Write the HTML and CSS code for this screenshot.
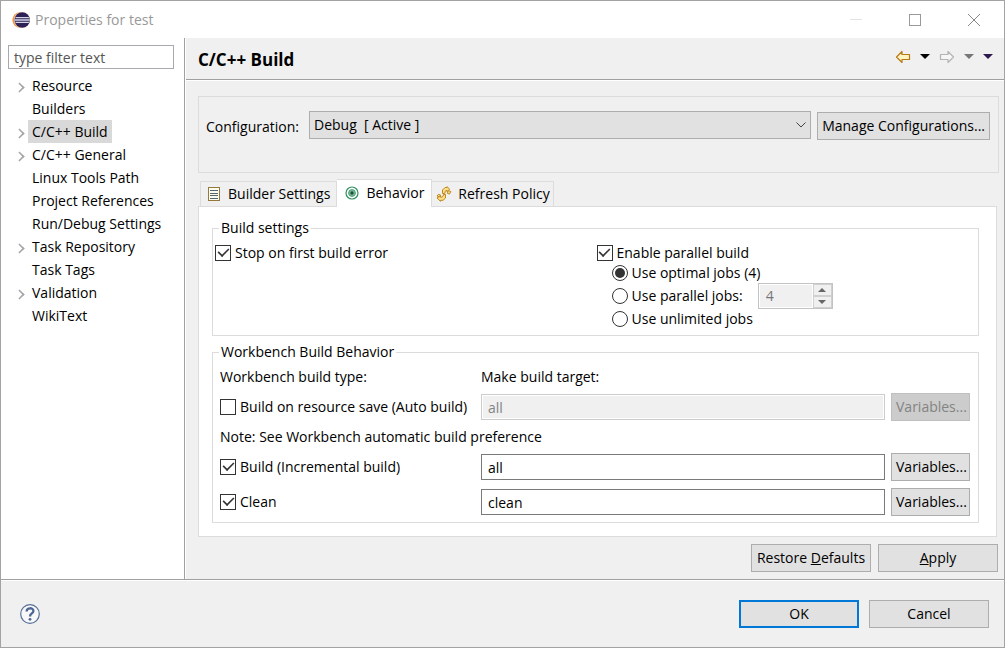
FILE: index.html
```html
<!DOCTYPE html>
<html lang="en">
<head>
<meta charset="utf-8">
<title>Properties for test</title>
<link rel="stylesheet" href="styles.css">
</head>
<body>
<div class="window">
  <header class="titlebar">
    <svg class="logo" viewBox="0 0 18 18" width="18" height="18" aria-hidden="true">
      <circle cx="8.200" cy="9" r="7.800" fill="#f2943a"/>
      <circle cx="10" cy="9" r="8" fill="#fbe3c8"/>
      <circle cx="10.200" cy="9" r="7.700" fill="#2c2255"/>
      <path d="M3.500 6.600h13.400M2.600 9h15.200M3.500 11.400h13.400" stroke="#d4d4e6" stroke-width="1.400"/>
    </svg>
    <h1 class="title">Properties for test</h1>
    <div class="caption">
      <button class="cap" aria-label="Minimize" disabled><svg viewBox="0 0 14 14" width="14" height="14"><path d="M1 6.500h12" stroke="#e3e3e3"/></svg></button>
      <button class="cap" aria-label="Maximize"><svg viewBox="0 0 14 14" width="14" height="14"><rect x="1.500" y="1.500" width="11" height="11" fill="none" stroke="#999"/></svg></button>
      <button class="cap" aria-label="Close"><svg viewBox="0 0 14 14" width="14" height="14"><path d="M1 1l12 12M13 1L1 13" stroke="#888"/></svg></button>
    </div>
  </header>
  <div class="body">
    <nav class="sidebar">
      <input class="filter" type="text" placeholder="type filter text" aria-label="Filter">
      <ul class="tree">
        <li class="branch"><a href="#">Resource</a></li>
        <li><a href="#">Builders</a></li>
        <li class="branch"><a href="#" class="selected">C/C++ Build</a></li>
        <li class="branch"><a href="#">C/C++ General</a></li>
        <li><a href="#">Linux Tools Path</a></li>
        <li><a href="#">Project References</a></li>
        <li><a href="#">Run/Debug Settings</a></li>
        <li class="branch"><a href="#">Task Repository</a></li>
        <li><a href="#">Task Tags</a></li>
        <li class="branch"><a href="#">Validation</a></li>
        <li><a href="#">WikiText</a></li>
      </ul>
    </nav>
    <main class="page">
      <div class="page-head">
        <h2>C/C++ Build</h2>
        <div class="history">
          <button aria-label="Back"><svg viewBox="0 0 16 14" width="16" height="14"><path d="M1.500 7L7 1.500V4.500H14.500V9.500H7V12.500Z" fill="#fff3c0" stroke="#b87a14" stroke-width="1.200" stroke-linejoin="round"/></svg></button>
          <button aria-label="Back history"><svg viewBox="0 0 10 6" width="10" height="6"><path d="M0 0h10L5 5z" fill="#000"/></svg></button>
          <button aria-label="Forward" disabled><svg viewBox="0 0 16 14" width="16" height="14"><path d="M14.500 7L9 1.500V4.500H1.500V9.500H9V12.500Z" fill="#f6f6f6" stroke="#b4b4b4" stroke-width="1.200" stroke-linejoin="round"/></svg></button>
          <button aria-label="Forward history" disabled><svg viewBox="0 0 10 6" width="10" height="6"><path d="M0 0h10L5 5z" fill="#777"/></svg></button>
          <button aria-label="View menu"><svg viewBox="0 0 10 6" width="10" height="6"><path d="M0 0h10L5 5z" fill="#2c1a4c"/></svg></button>
        </div>
      </div>
      <div class="content">
        <section class="config">
          <label for="config">Configuration:</label>
          <div class="select">
            <select id="config"><option>Debug&nbsp; [ Active ]</option></select>
            <svg viewBox="0 0 10 6" width="10" height="6"><path d="M.5.5L5 5L9.500.5" fill="none" stroke="#444"/></svg>
          </div>
          <button class="btn">Manage Configurations...</button>
        </section>
        <div class="tabs" role="tablist">
          <button class="tab" role="tab">
            <svg viewBox="0 0 16 16" width="16" height="16"><rect x="2.500" y="1.500" width="11" height="13" fill="#fdfdf4" stroke="#94793a"/><path d="M4 4.500h8M4 7.500h8M4 9.500h8M4 12.500h8" stroke="#56686f"/></svg>
            Builder Settings</button>
          <button class="tab active" role="tab" aria-selected="true">
            <svg viewBox="0 0 16 16" width="16" height="16"><circle cx="8" cy="8" r="6" fill="#fff" stroke="#2f8f5f" stroke-width="1.200"/><circle cx="8" cy="8" r="3.400" fill="#7fbb9b" stroke="#4f9c77"/><circle cx="8" cy="8" r="1.700" fill="#1d5237"/></svg>
            Behavior</button>
          <button class="tab" role="tab">
            <svg viewBox="0 0 16 16" width="16" height="16" fill="#ffe08a" stroke="#bd861c" stroke-linejoin="round"><path d="M7.500 7.500H5.500V4L8 1.500H10V.7L12.700 3.200L10 5.800V4.600H9L8 5.500V7.500Z" transform="translate(1 0)"/><path d="M12 4.500L14.800 5.500L13.500 8L11.500 7.500Z"/><path d="M7.500 8.500H9.500V12L7 14.300H4.500V15.300L1 12L4.500 9.500V11.200H6L7 10.300Z"/><path d="M3.500 11L1 10L2.500 8.300L4.500 9Z"/></svg>
            Refresh Policy</button>
        </div>
        <div class="panel" role="tabpanel">
          <fieldset>
            <legend>Build settings</legend>
            <div class="cols">
              <label class="opt"><input type="checkbox" checked>Stop on first build error</label>
              <div>
                <label class="opt"><input type="checkbox" checked>Enable parallel build</label>
                <div class="jobs">
                  <label class="opt"><input type="radio" name="jobs" checked>Use optimal jobs (4)</label>
                  <div class="parallel">
                    <label class="opt"><input type="radio" name="jobs">Use parallel jobs:</label>
                    <span class="spinner">
                      <input type="text" value="4" aria-label="Number of jobs" disabled>
                      <span class="steps">
                        <button aria-label="Increase" disabled><svg viewBox="0 0 8 4" width="8" height="4"><path d="M0 4L4 0L8 4z" fill="#666"/></svg></button>
                        <button aria-label="Decrease" disabled><svg viewBox="0 0 8 4" width="8" height="4"><path d="M0 0L4 4L8 0z" fill="#666"/></svg></button>
                      </span>
                    </span>
                  </div>
                  <label class="opt"><input type="radio" name="jobs">Use unlimited jobs</label>
                </div>
              </div>
            </div>
          </fieldset>
          <fieldset>
            <legend>Workbench Build Behavior</legend>
            <div class="grid">
              <span class="text">Workbench build type:</span>
              <span class="text wide">Make build target:</span>
              <label class="opt"><input type="checkbox">Build on resource save (Auto build)</label>
              <input class="field" type="text" value="all" aria-label="Auto build target" disabled>
              <button class="btn" disabled>Variables...</button>
              <span class="text note">Note: See Workbench automatic build preference</span>
              <label class="opt"><input type="checkbox" checked>Build (Incremental build)</label>
              <input class="field" type="text" value="all" aria-label="Incremental build target">
              <button class="btn">Variables...</button>
              <label class="opt"><input type="checkbox" checked>Clean</label>
              <input class="field" type="text" value="clean" aria-label="Clean target">
              <button class="btn">Variables...</button>
            </div>
          </fieldset>
        </div>
        <div class="actions">
          <button class="btn">Restore <u>D</u>efaults</button>
          <button class="btn"><u>A</u>pply</button>
        </div>
      </div>
    </main>
  </div>
  <footer class="footer">
    <button class="help" aria-label="Help"><svg viewBox="0 0 20 20" width="20" height="20"><circle cx="10" cy="10" r="9.300" fill="#f8f8f8" stroke="#566f98" stroke-width="1.200"/><path d="M6.600 7.400C6.600 3.300 13.400 3.300 13.400 7C13.400 9.500 10 9.400 10 12.400" fill="none" stroke="#4f6694" stroke-width="2.300"/><circle cx="10" cy="15.300" r="1.400" fill="#4f6694"/></svg></button>
    <button class="btn primary">OK</button>
    <button class="btn">Cancel</button>
  </footer>
</div>
</body>
</html>
```

FILE: styles.css
```css
* { box-sizing: border-box; }
body {
  margin: 0;
  font: 14px/20px "Open Sans", "Noto Sans", sans-serif;
  color: #000;
}
button, input, select { font: inherit; color: inherit; margin: 0; }
button svg { display: block; }
.window {
  min-height: 100vh;
  display: flex;
  flex-direction: column;
  border: 1px solid #a3a3a3;
  background: #f0f0f0;
}
.titlebar {
  display: flex;
  align-items: center;
  height: 37px;
  padding: 0 1px 0 11px;
  background: #fff;
}
.title {
  flex: 1;
  margin: 0 0 0 5px;
  font-size: 14px;
  font-weight: 400;
  color: #999;
}
.caption { display: flex; }
.cap {
  width: 59px;
  height: 36px;
  display: grid;
  place-items: center;
  border: 0;
  background: none;
}
.body { flex: 1; display: flex; border-bottom: 1px solid #a0a0a0; }
.sidebar {
  width: 184px;
  flex: none;
  padding: 7px 10px 7px 7px;
  background: #fff;
  border-right: 1px solid #a0a0a0;
}
.filter {
  display: block;
  width: 100%;
  height: 24px;
  padding: 0 5px;
  border: 1px solid #a8a8ae;
}
.filter::placeholder { color: #555; }
.tree { list-style: none; margin: 5px 0 0; padding: 0; }
.tree li { display: flex; height: 23px; padding-left: 20px; position: relative; }
.tree a { padding: 0 4px; line-height: 23px; color: #000; text-decoration: none; white-space: nowrap; }
.tree .selected { background: #d9d9d9; }
.branch::before {
  content: "";
  position: absolute;
  left: 7px;
  top: 9px;
  width: 7px;
  height: 7px;
  border: solid #a6a6a6;
  border-width: 2px 2px 0 0;
  transform: rotate(45deg) scale(0.8);
}
.page { flex: 1; min-width: 0; border-left: 1px solid #fff; }
.page-head {
  display: flex;
  align-items: center;
  height: 42px;
  padding: 2px 11px 0 12px;
  border-bottom: 1px solid #a0a0a0;
}
.page-head h2 { flex: 1; margin: 0; font-size: 17px; line-height: 22px; }
.history { display: flex; align-items: center; gap: 9px; padding-bottom: 6px; }
.history button { padding: 0; border: 0; background: none; }
.content { padding: 15px 5px 6px 12px; border-top: 1px solid #fff; }
.config {
  display: flex;
  align-items: flex-start;
  gap: 6px;
  height: 77px;
  padding: 14px 8px 0 7px;
  border: 1px solid #dcdcdc;
}
.config label { padding-right: 4px; line-height: 32px; }
.config .btn { margin-top: 1px; }
.select { flex: 1; position: relative; }
.select select {
  display: block;
  width: 100%;
  height: 28px;
  padding: 0 4px;
  border: 1px solid #adadad;
  border-radius: 0;
  background: #e1e1e1;
  appearance: none;
}
.select svg { position: absolute; right: 5px; top: 11px; pointer-events: none; }
.btn {
  height: 28px;
  padding: 0 4px;
  border: 1px solid #adadad;
  background: #e1e1e1;
  white-space: nowrap;
}
.btn:disabled { background: #ccc; border-color: #bfbfbf; color: #838383; }
.tabs { display: flex; align-items: flex-end; padding: 6px 0 0 2px; }
.tab {
  display: flex;
  align-items: center;
  gap: 6px;
  height: 25px;
  padding: 0 3px 0 4px;
  border: 1px solid #dcdcdc;
  border-width: 1px 1px 0 0;
  background: #f0f0f0;
  white-space: nowrap;
}
.tab:first-child { border-left-width: 1px; padding: 0 6px 0 5px; }
.tab.active {
  height: 28px;
  margin-bottom: -1px;
  padding: 0 7px 2px;
  background: #fff;
  position: relative;
}
.panel { margin-right: 2px; padding: 12px 17px 13px 13px; border: 1px solid #dcdcdc; background: #fff; }
fieldset { margin: 0; padding: 0; border: 1px solid #dcdcdc; min-width: 0; }
fieldset + fieldset { margin-top: 7px; }
legend { margin-left: 6px; padding: 0 2px; line-height: 18px; }
.cols { display: grid; grid-template-columns: 1fr 1fr; padding: 6px 0 6px 2px; }
.opt { display: flex; align-items: center; gap: 4px; white-space: nowrap; }
.opt input {
  appearance: none;
  flex: none;
  width: 16px;
  height: 16px;
  border: 1px solid #333;
  background: #fff;
  display: grid;
  place-items: center;
}
.opt input[type="radio"] { border-radius: 50%; }
.opt input[type="radio"]:checked::before {
  content: "";
  width: 10px;
  height: 10px;
  border-radius: 50%;
  background: #333;
}
.opt input[type="checkbox"]:checked::before {
  content: "";
  width: 11px;
  height: 6px;
  margin-bottom: 4px;
  border: solid #333;
  border-width: 0 0 2px 2px;
  transform: rotate(-45deg) scale(0.8);
}
.cols > .opt { align-self: start; }
.jobs { padding-left: 15px; }
.parallel { display: flex; align-items: center; gap: 15px; }
.spinner { display: flex; width: 75px; height: 26px; border: 1px solid #c3c3c3; background: #f0f0f0; }
.spinner input { flex: 1; min-width: 0; padding: 0 6px; border: 1px solid #fff; background: #f0f0f0; color: #777; }
.steps { display: flex; flex-direction: column; width: 19px; }
.steps button { flex: 1; display: grid; place-items: center; padding: 0; border: 1px solid #d0d0d0; background: #f0f0f0; }
.grid {
  display: grid;
  grid-template-columns: 255px 1fr 79px;
  align-items: center;
  gap: 7px 6px;
  padding: 7px 8px 6px 7px;
}
.text { line-height: 18px; }
.wide { grid-column: 2 / 4; }
.note { grid-column: 1 / 4; }
.field { width: 100%; height: 26px; padding: 0 6px; border: 1px solid #7a7a7a; background: #fff; }
.field:disabled { border-color: #ccc; background: #f0f0f0; color: #838383; box-shadow: inset 0 0 0 1px #fff; }
.actions { display: flex; justify-content: flex-end; gap: 7px; padding: 7px 1px 0 0; }
.actions .btn, .footer .btn { width: 120px; }
.footer {
  display: flex;
  align-items: center;
  gap: 10px;
  height: 67px;
  padding: 0 15px 0 19px;
  border-top: 1px solid #fff;
}
.help { margin-right: auto; padding: 0; border: 0; background: none; }
.primary { border: 2px solid #0078d7; }
```
